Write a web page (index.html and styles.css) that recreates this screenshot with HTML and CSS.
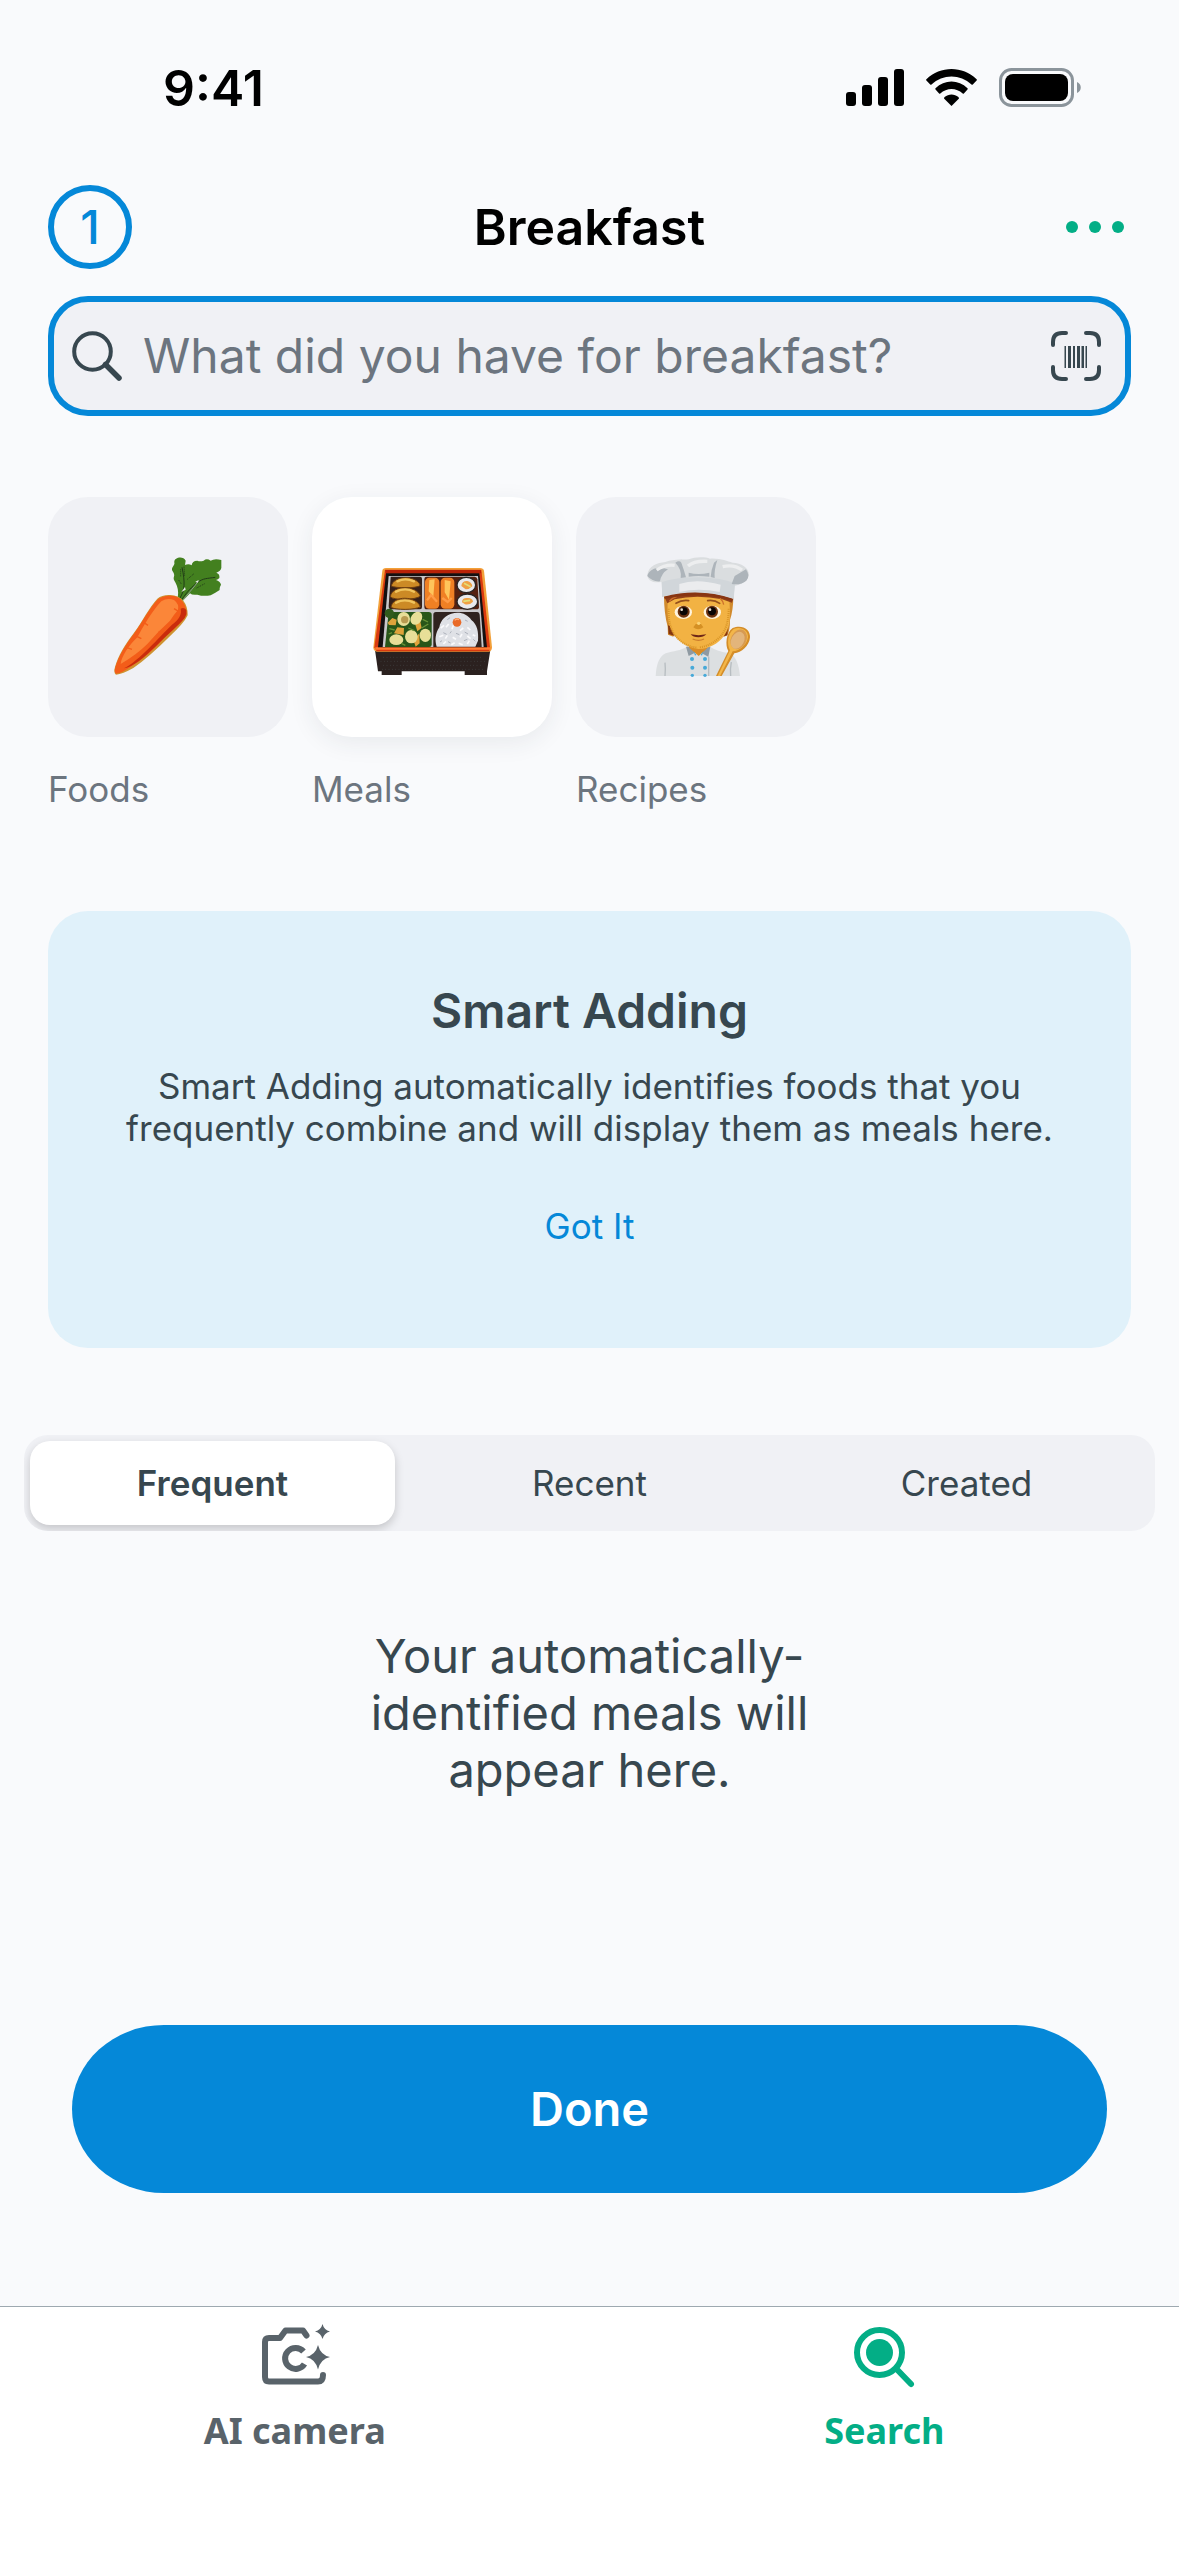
FILE: index.html
```html
<!DOCTYPE html>
<html lang="en">
<head>
<meta charset="utf-8">
<meta name="viewport" content="width=device-width, initial-scale=1">
<title>Breakfast</title>
<link rel="stylesheet" href="styles.css">
</head>
<body>
<header class="status">
  <span class="status-time">9:41</span>
  <svg class="status-icons" width="236" height="40" viewBox="0 0 236 40" aria-hidden="true">
    <rect x="0" y="24" width="10" height="14" rx="3"/>
    <rect x="16" y="17" width="10" height="21" rx="3"/>
    <rect x="32" y="9" width="10" height="29" rx="3"/>
    <rect x="48" y="1" width="10" height="37" rx="3"/>
    <path d="M105.500 38l-7.500-7.500q0-.8.600-1.400c4-3.600 9.800-3.600 13.800 0q.6.600.6 1.400z"/>
    <path d="M89.500 21.500q-.5-.6 0-1.200c9-9 23-9 32 0q.5.600 0 1.200l-3.600 4q-.6.500-1.200 0c-6.400-6-16-6-22.400 0q-.6.500-1.200 0z"/>
    <path d="M80.400 12.500q-.6-.6 0-1.300c14-13.600 36.200-13.600 50.200 0q.6.700 0 1.300l-3.800 3.900q-.7.500-1.300 0c-11.200-10.700-28.800-10.700-40 0q-.6.500-1.300 0z"/>
    <rect x="154.500" y="1.500" width="72" height="36" rx="11" fill="none" stroke="#8b949b" stroke-width="3"/>
    <rect x="159" y="6" width="63" height="27" rx="8"/>
    <path d="M231 14c5 2 5 9 0 11z" fill="#8b949b"/>
  </svg>
</header>

<main class="page">
  <div class="nav">
    <button class="step" type="button" aria-label="Items added">1</button>
    <h1 class="nav-title">Breakfast</h1>
    <button class="more" type="button" aria-label="More options">
      <svg width="58" height="12" viewBox="0 0 58 12"><circle cx="6" cy="6" r="6"/><circle cx="29" cy="6" r="6"/><circle cx="52" cy="6" r="6"/></svg>
    </button>
  </div>

  <div class="search">
    <label class="search-icon" for="query" aria-label="Search">
      <svg width="50" height="50" viewBox="0 0 50 50"><circle cx="20.500" cy="20.500" r="18.300"/><path d="M33.500 33.500L47 47" stroke-width="5.500"/></svg>
    </label>
    <input class="search-input" id="query" type="text" placeholder="What did you have for breakfast?">
    <button class="scan" type="button" aria-label="Scan barcode">
      <svg width="50" height="50" viewBox="0 0 50 50">
        <path d="M2 14V11q0-9 9-9h4M35 2h4q9 0 9 9v3M48 36v3q0 9-9 9h-4M15 48h-4q-9 0-9-9v-3" stroke-width="4"/>
        <path class="bars" d="M13.500 15h1.500v22h-1.500zM17 15h3v22h-3zM22 15h2v22h-2zM26 15h3v22h-3zM30.500 15h2.500v22h-2.500zM34.500 15h1.500v22h-1.500z"/>
      </svg>
    </button>
  </div>

  <div class="kinds">
    <button class="kind" type="button">
      <span class="kind-tile">
        <svg width="120" height="120" viewBox="54 81 360 360">
          <path d="M262 208C268 180 262 168 252 150 248 138 258 140 248 124 240 114 256 106 253 98 250 82 280 76 287 92L285 105Q296 100 305 106 306 92 322 92 330 96 341 92 350 84 362 92 374 84 394 90L394 114Q392 124 379 128 390 132 388 144 384 148 378 150 390 154 393 164 388 172 389 180 374 190 362 196 340 200 322 194 306 196 300 190L278 213z" fill="#43801f"/>
          <path d="M270 204C284 180 286 160 276 112M276 208C292 184 304 172 322 158S350 146 376 142" fill="none" stroke="#213c18" stroke-width="3"/>
          <path d="M279 210C290 196 312 172 326 152" fill="none" stroke="#8b9c8c" stroke-width="3"/>
          <path d="M274 186l11-15 2 8zM316 155l10-5-3 8z" fill="#e8ece6"/>
          <path d="M272 118v24M282 110l2 30M292 148l20-17M266 150l8 12M320 174l26-14" stroke="#213c18" stroke-width="3" stroke-dasharray="3 3" fill="none"/>
          <path d="M78 434Q70 428 75 411C84 380 105 343 131 310 158 272 178 232 202 206Q216 194 240 195 266 196 280 212 294 230 293 256 282 280 238 320 176 382 130 414 98 432 78 434z" fill="#cf9330"/>
          <path d="M78 431Q71 426 77 409C86 380 107 343 133 310 160 272 180 232 204 208Q220 196 240 197 262 196 276 212 291 230 289 254 270 285 231 315 176 378 122 410 98 428 78 431z" fill="#f35d19"/>
          <path d="M102 415C150 390 206 322 246 284 268 268 276 252 272 236Q282 230 289 240 292 252 284 264C262 290 236 310 196 350 160 384 130 410 102 415z" fill="#c92c0c"/>
          <path d="M92 402C94 380 118 344 142 322 162 286 184 246 214 214Q232 202 252 210 268 222 264 240 250 256 240 272 202 306 172 342 140 374 92 402z" fill="#fb8639"/>
          <path d="M108 352l18 6M162 278l12 8M142 320l12 6M252 236l14 8M206 304l12 4" stroke="#f35d19" stroke-width="4"/>
        </svg>
      </span>
      <span class="kind-name">Foods</span>
    </button>
    <button class="kind kind-active" type="button" aria-pressed="true">
      <span class="kind-tile">
        <svg width="120" height="120" viewBox="66 51 360 360">
          <path d="M75 330h346l-10 64v11h-67v-11H155v11H95v-11H84z" fill="#2b211f"/>
          <path d="M100 352h300M92 364h312M100 376h300M96 388h304" stroke="#4d5657" stroke-width="2" stroke-dasharray="2 8"/>
          <path d="M97 92Q98 84 108 84H390Q400 84 402 92L426 322Q426 332 418 335L80 335Q70 333 70 322z" fill="#f2a13a"/>
          <path d="M105 89H394L420 322 418 334 80 334 73 322z" fill="#da3a10"/>
          <path d="M106 90h286l2 10H107z" fill="#b92208"/>
          <path d="M76 322h346l-1 7H76z" fill="#ff7c32"/>
          <path d="M108 100H388L411 322H84z" fill="#141011"/>
          <path d="M116 108H384L401 321H98z" fill="#c9c8cb"/>
          <path d="M122 110H210Q216 110 216 116V201Q216 208 210 208H121Q115 206 116 198z" fill="#35201a"/>
          <path d="M230 110H374Q381 110 382 118L387 200Q387 208 380 208H230Q223 208 223 200V117Q223 110 230 110z" fill="#56200f"/>
          <path d="M116 216H236Q245 216 245 224V314Q245 321 238 321H105z" fill="#285619"/>
          <path d="M258 216H382Q388 216 389 224L395 321H250V224Q250 216 258 216z" fill="#30231f"/>
          <g fill="#cc8a25" stroke="#6d3d10" stroke-width="3">
            <path d="M124 138C130 106 198 104 211 136 202 146 135 145 124 138zM121 170C126 134 200 136 211 168 200 180 130 182 121 170zM123 202C128 164 200 168 211 200 196 211 134 210 123 202z"/>
          </g>
          <path d="M142 124q24-12 50 0M138 155q28-14 54 0M138 188q26-14 54 0" fill="none" stroke="#f0c45e" stroke-width="7" stroke-linecap="round"/>
          <rect x="225" y="113" width="43" height="93" rx="13" fill="#f08024"/><rect x="272" y="113" width="41" height="93" rx="13" fill="#f08024"/>
          <path d="M238 120l16-2-4 52-14-16zM284 120l18 4-5 55-13-22z" fill="#ffc55b"/>
          <path d="M231 181l12-16 18 20M277 174l16 12 12-12" fill="none" stroke="#ff9b46" stroke-width="7"/>
          <g fill="#e9e9ec" stroke="#292322" stroke-width="4"><ellipse cx="349" cy="135" rx="28" ry="23"/><ellipse cx="352" cy="185" rx="31" ry="23"/></g>
          <path d="M334 138q2-16 18-15 14 4 15 16-10 10-20 9zM336 187q0-15 18-13 14 0 15 11-10 11-24 8z" fill="#efa045"/>
          <path d="M342 130l20 10M340 184l20-3" stroke="#e2df78" stroke-width="5"/>
          <circle cx="118" cy="220" r="14" fill="#315b1d"/>
          <g fill="#dfa33b"><path d="M113 248l14-14 13 5-3 17-20-1zM132 280l10-18 20 2-1 21zM196 254l14-14 5 24-13 10zM190 300l18-20 1 30-12 10z"/></g>
          <g fill="#e8df98"><ellipse cx="161" cy="237" rx="19" ry="21"/><ellipse cx="199" cy="235" rx="16" ry="21" transform="rotate(35 199 235)"/><ellipse cx="139" cy="299" rx="21" ry="16"/><ellipse cx="184" cy="290" rx="19" ry="20"/><ellipse cx="226" cy="286" rx="17" ry="20"/></g>
          <circle cx="164" cy="239" r="11" fill="#b89b51"/>
          <path d="M118 266l16 4M175 264l18 8M215 264l20-12M154 310l12 6M116 282l10-4M218 238l16 8" stroke="#689337" stroke-width="4"/>
          <path d="M260 320C254 300 256 280 268 262 272 238 288 226 304 221 330 214 352 222 364 240 382 254 386 276 384 302L376 320z" fill="#dfe1e6"/>
          <path d="M272 264l10-8M288 262l8-10M306 268l4-12M330 272l10-8M352 262l9 8M268 290l12-4M286 296l6-10M308 292l10 6M330 292l6-10M352 288l10 8M280 312l8-8M304 314l10-6M326 310l12 4M352 312l6-10M368 284l8 4" fill="none" stroke="#fafafc" stroke-width="5"/>
          <path d="M280 278l10 5M318 280l10 4M344 276l10 6M294 305l8 4M342 302l10-4M292 239l8-6M370 298l6 6M300 280l4-6M345 240l8 4M270 306l6-4" stroke="#aeb2bc" stroke-width="3"/>
          <circle cx="321" cy="247" r="13" fill="#e96a28"/><path d="M314 241q6-7 13-2" fill="none" stroke="#ffad77" stroke-width="4"/>
        </svg>
      </span>
      <span class="kind-name">Meals</span>
    </button>
    <button class="kind" type="button">
      <span class="kind-tile">
        <svg width="120" height="120" viewBox="48 51 360 360">
          <path d="M107 408Q110 352 137 340C160 332 184 332 200 320H270Q290 334 330 340 354 352 360 408z" fill="#dcdfe1"/>
          <path d="M135 368q2 20 0 40M334 366q-4 20-2 42M266 350v58" stroke="#b7bdc1" stroke-width="4" fill="none"/>
          <path d="M198 320l8 28 28-14 31 16 6-30z" fill="#8f9aa2"/>
          <path d="M205 300h61l-4 24-26 24-28-24z" fill="#d98c26"/>
          <path d="M132 168H340Q340 210 330 240 330 270 322 286L312 290 300 260H168L160 290 144 284 143 260Q132 220 132 168z" fill="#d18a2c"/>
          <path d="M144 256l12 4 8 28-18-6zM312 262l12-8-2 32-16 4z" fill="#84350f"/>
          <path d="M143 180Q160 168 236 168 310 168 328 180C332 240 330 262 312 288 294 312 268 326 236 327 200 324 168 300 156 274 142 246 142 222 143 180z" fill="#f2b243"/>
          <path d="M146 206q-2 52 20 81 26 32 65 36M326 206q0 52-22 80-26 30-65 36" fill="none" stroke="#d99527" stroke-width="6" stroke-dasharray="3 3"/>
          <path d="M134 172Q190 154 260 158 320 162 340 176L336 188 306 178Q230 162 164 178L142 190z" fill="#914018"/>
          <path d="M148 184q10-12 22-14M300 174q10 10 11 20" fill="none" stroke="#ce702a" stroke-width="4"/>
          <path d="M168 190q18-11 38-8M263 182q20-3 36 8" fill="none" stroke="#95501c" stroke-width="5" stroke-linecap="round"/>
          <ellipse cx="190" cy="217" rx="26" ry="20" fill="#fff4df"/><ellipse cx="277" cy="217" rx="26" ry="20" fill="#fff4df"/>
          <circle cx="191" cy="215" r="18" fill="#6b3210"/><circle cx="276" cy="215" r="18" fill="#6b3210"/>
          <circle cx="191" cy="214" r="12" fill="#090504"/><circle cx="276" cy="214" r="12" fill="#090504"/>
          <circle cx="185" cy="209" r="4" fill="#e9dfd2"/><circle cx="270" cy="209" r="4" fill="#e9dfd2"/>
          <path d="M220 262q14 12 30 0l-7-10h-16z" fill="#d59024"/><circle cx="236" cy="250" r="5" fill="#fbd376"/>
          <path d="M212 283q24 5 47 0-8 9-24 9-16 0-23-9z" fill="#6e2617"/>
          <path d="M218 297q18 8 34 0" stroke="#cc7d2c" stroke-width="4" fill="none"/>
          <path d="M124 126C100 130 82 122 82 104 86 78 112 68 136 66 166 56 194 60 206 58 224 50 256 50 270 56 302 54 320 64 338 68 364 68 388 84 387 106 382 124 364 134 344 138L340 176Q236 140 128 170z" fill="#dadddf"/>
          <path d="M126 126Q164 112 234 112 308 114 345 130L341 178Q236 142 126 171z" fill="#d1d6da"/>
          <path d="M178 132q52-18 124 2l-3 22q-64-14-121 0z" fill="#ebecee"/>
          <path d="M82 108q2-14 20-22 20-6 42 2-20 12-24 36-22 2-38-16zM166 68q12-8 18 0 8 22 14 44l-16 2q4-26-16-46zM282 68l10-8q-10 30-8 54l-12-3q2-24 10-43zM344 108l34-20q14 20 1 34-16 14-44 10zM206 98q30 8 62 0v12q-34-4-62 0z" fill="#adb4ba"/>
          <path d="M110 90q26-18 54-14M204 78q18-16 58-14M308 80q34-8 58 10" fill="none" stroke="#edeeef" stroke-width="10"/>
          <path d="M132 170Q236 142 338 176L336 182Q238 154 134 176z" fill="#883512"/>
          <g fill="#47a9d8"><circle cx="216" cy="357" r="6"/><circle cx="255" cy="357" r="6"/><circle cx="217" cy="383" r="6"/><circle cx="255" cy="383" r="6"/><circle cx="217" cy="406" r="5"/><circle cx="255" cy="406" r="5"/><path d="M221 334l8 10-4 3zM250 334l-8 10 4 3z"/></g>
          <path d="M288 408L325 333C315 316 318 278 338 264 366 252 392 268 390 292 388 318 364 338 343 340L305 408z" fill="#d48d28"/>
          <path d="M293 408L330 331C320 312 323 280 341 267 362 258 385 270 384 291 382 312 360 333 338 334L300 408z" fill="#f3b649"/>
          <ellipse cx="356" cy="298" rx="23" ry="31" transform="rotate(28 356 298)" fill="#d79a51"/>
          <ellipse cx="353" cy="301" rx="19" ry="27" transform="rotate(28 353 301)" fill="#e3b57b"/>
        </svg>
      </span>
      <span class="kind-name">Recipes</span>
    </button>
  </div>

  <section class="tip">
    <h2 class="tip-title">Smart Adding</h2>
    <p class="tip-text">Smart Adding automatically identifies foods that you frequently combine and will display them as meals here.</p>
    <button class="tip-action" type="button">Got It</button>
  </section>

  <div class="segments" role="tablist">
    <button class="segment segment-active" type="button" role="tab" aria-selected="true">Frequent</button>
    <button class="segment" type="button" role="tab" aria-selected="false">Recent</button>
    <button class="segment" type="button" role="tab" aria-selected="false">Created</button>
  </div>

  <p class="empty">Your automatically-<br>identified meals will<br>appear here.</p>

  <button class="done" type="button">Done</button>
</main>

<nav class="tabbar">
  <a class="tab" href="#camera">
    <svg width="72" height="66" viewBox="-2 0 72 66">
      <path d="M45.500 12.500L42 7.500H24.500L19 15H8Q4 15 4 19V54Q4 58.500 8 58.500H57Q62 58.500 62 52" fill="none" stroke="currentColor" stroke-width="6" stroke-linecap="round" stroke-linejoin="round"/>
      <path d="M42.500 28.500A10.500 10.500 0 1 0 43.500 41" fill="none" stroke="currentColor" stroke-width="6"/>
      <path d="M57 22Q59.500 32 69 34 59.500 36 57 46.500 54.500 36 45 34 54.500 32 57 22zM61.500 1Q63 7 69 8.500 63 10 61.500 16 60 10 54 8.500 60 7 61.500 1z" fill="currentColor"/>
    </svg>
    AI camera
  </a>
  <a class="tab tab-active" href="#search" aria-current="page">
    <svg width="72" height="66" viewBox="0 0 72 66">
      <circle cx="31.500" cy="29.500" r="22.500" fill="none" stroke="currentColor" stroke-width="6"/>
      <circle cx="31.500" cy="29.500" r="13.500" fill="currentColor"/>
      <path d="M49 46.500L63 61" stroke="currentColor" stroke-width="6" stroke-linecap="round"/>
    </svg>
    Search
  </a>
</nav>
</body>
</html>
```
FILE: styles.css
```css
:root {
  --blue: #0588d8;
  --green: #03ae86;
  --ink: #37474f;
  --muted: #6c757f;
  --fill: #f0f1f5;
}

* { box-sizing: border-box; }

body {
  margin: 0;
  min-height: 100vh;
  display: flex;
  flex-direction: column;
  background: #f9fafc;
  color: var(--ink);
  font-family: Inter, "Liberation Sans", sans-serif;
  font-size: 35px;
  line-height: 42px;
}

h1, h2, p { margin: 0; }

button {
  padding: 0;
  border: 0;
  background: none;
  color: inherit;
  font: inherit;
}

svg { display: block; }

.status {
  display: flex;
  justify-content: space-between;
  align-items: center;
  padding: 58px 97px 0 163px;
  color: #000;
}

.status-time {
  font-size: 50px;
  font-weight: 600;
  line-height: 60px;
}

.page {
  flex: 1;
  display: flex;
  flex-direction: column;
  padding: 67px 48px 113px;
}

.nav {
  display: grid;
  grid-template-columns: 1fr auto 1fr;
  align-items: center;
}

.step {
  width: 84px;
  height: 84px;
  border: 6px solid var(--blue);
  border-radius: 50%;
  color: var(--blue);
  font-size: 47px;
  font-weight: 500;
}

.nav-title {
  color: #000;
  font-size: 50px;
  font-weight: 600;
  line-height: 60px;
}

.more {
  justify-self: end;
  padding: 24px 7px;
  fill: var(--green);
}

.search {
  display: flex;
  align-items: center;
  gap: 21px;
  height: 120px;
  margin-top: 27px;
  padding: 0 24px 0 18px;
  border: 6px solid var(--blue);
  border-radius: 40px;
  background: var(--fill);
}

.search-icon, .scan {
  fill: none;
  stroke: var(--ink);
  stroke-width: 4;
  stroke-linecap: round;
}

.bars {
  fill: var(--ink);
  stroke: none;
}

.search-input {
  flex: 1;
  min-width: 0;
  padding: 0;
  border: 0;
  outline: 0;
  background: none;
  color: var(--ink);
  font: inherit;
  font-size: 48px;
  line-height: 60px;
}

.search-input::placeholder {
  color: var(--muted);
  opacity: 1;
}

.kinds {
  display: flex;
  gap: 24px;
  margin-top: 81px;
}

.kind {
  display: flex;
  flex-direction: column;
  gap: 31px;
  color: var(--muted);
  text-align: left;
}

.kind-tile {
  display: grid;
  place-items: center;
  width: 240px;
  height: 240px;
  border-radius: 40px;
  background: var(--fill);
}

.kind-active .kind-tile {
  background: #fff;
  box-shadow: 0 6px 24px rgba(40, 50, 70, 0.08);
}

.tip {
  display: flex;
  flex-direction: column;
  align-items: center;
  margin-top: 101px;
  padding: 70px 48px 101px;
  border-radius: 40px;
  background: #e0f1fa;
  text-align: center;
}

.tip-title {
  font-size: 48px;
  font-weight: 600;
  line-height: 60px;
}

.tip-text {
  max-width: 960px;
  margin-top: 24px;
}

.tip-action {
  margin-top: 56px;
  color: var(--blue);
}

.segments {
  display: grid;
  grid-template-columns: repeat(3, 1fr);
  gap: 12px;
  margin: 87px -24px 0;
  padding: 6px;
  border-radius: 24px;
  background: var(--fill);
  overflow: hidden;
}

.segment {
  height: 84px;
  border-radius: 20px;
}

.segment-active {
  background: #fff;
  box-shadow: 0 4px 10px rgba(0, 0, 0, 0.18);
  font-weight: 600;
}

.empty {
  margin: 96px 0;
  font-size: 47px;
  line-height: 57px;
  text-align: center;
}

.done {
  height: 168px;
  margin: auto 24px 0;
  border-radius: 92px / 84px;
  background: var(--blue);
  color: #fff;
  font-size: 47px;
  font-weight: 600;
}

.tabbar {
  display: grid;
  grid-template-columns: 1fr 1fr;
  padding: 16px 0 101px;
  border-top: 1px solid #9ea9b0;
  background: #fff;
}

.tab {
  display: flex;
  flex-direction: column;
  align-items: center;
  gap: 18px;
  color: #59636a;
  font-family: "Noto Sans", sans-serif;
  font-size: 36px;
  font-weight: 700;
  line-height: 48px;
  text-decoration: none;
}

.tab-active { color: var(--green); }
```
